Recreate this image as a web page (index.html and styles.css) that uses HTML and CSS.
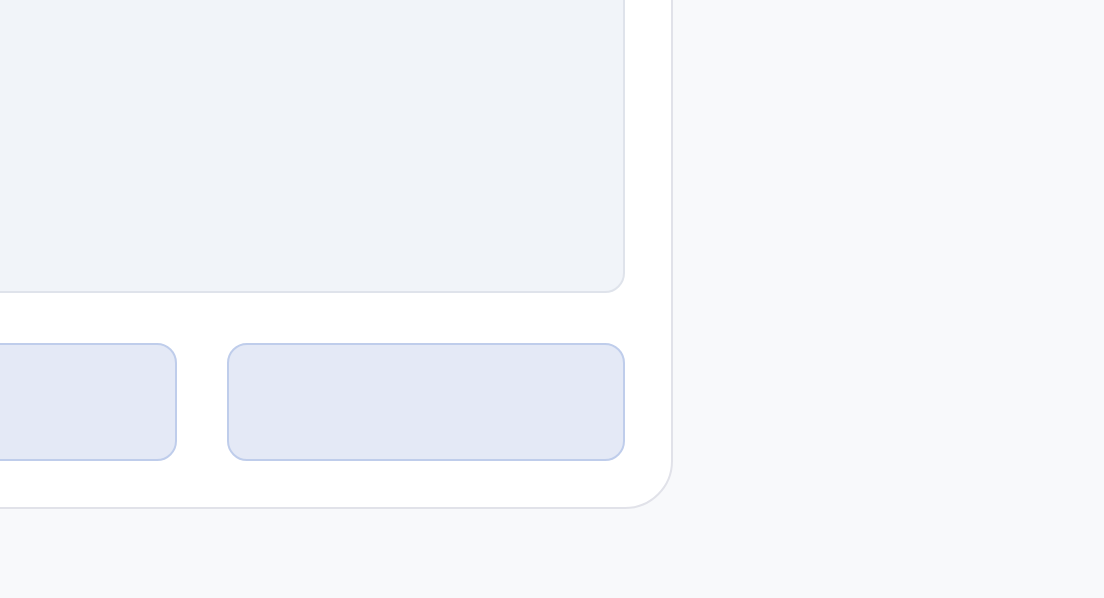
FILE: index.html
```html
<!DOCTYPE html>
<html>
<head>
<meta charset="utf-8">
<link rel="stylesheet" href="styles.css">
</head>
<body>
  <div class="card">
    <div class="panel"></div>
    <div class="actions">
      <div class="btn"></div>
      <div class="btn"></div>
    </div>
  </div>
</body>
</html>
```
FILE: styles.css
```css
html, body {
  margin: 0;
  padding: 0;
  background: #f8f9fb;
  overflow: hidden;
  font-family: "Inter", "Liberation Sans", sans-serif;
}
body {
  width: 1104px;
  height: 598px;
}
.card {
  box-sizing: border-box;
  width: 942px;
  margin-left: -269px;
  margin-top: -200px;
  background: #ffffff;
  border: 2px solid #e1e2e9;
  border-radius: 48px;
  padding: 46px;
  display: flex;
  flex-direction: column;
  gap: 50px;
}
.panel {
  box-sizing: border-box;
  height: 445px;
  background: #f1f4f9;
  border: 2px solid #dfe3eb;
  border-radius: 20px;
}
.actions {
  display: grid;
  grid-template-columns: 1fr 1fr;
  gap: 50px;
}
.btn {
  box-sizing: border-box;
  height: 118px;
  background: #e4e9f6;
  border: 2px solid #bfcdeb;
  border-radius: 20px;
}
```
